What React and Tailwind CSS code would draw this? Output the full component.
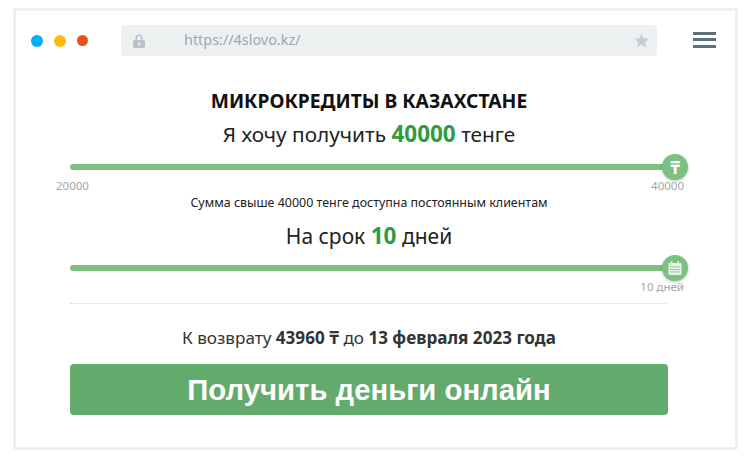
const PT = "font-['Noto_Sans',sans-serif]";

function SliderTrack({ children }) {
  return (
    <div className="relative h-[6px] w-[606px] rounded-full bg-[#7cc182]">
      <span className="absolute right-[-12px] top-[-10px] flex h-[26px] w-[26px] items-center justify-center rounded-full bg-[#7cc182] shadow-[0_1px_3px_rgba(0,0,0,0.25)]">
        {children}
      </span>
    </div>
  );
}

export default function App() {
  return (
    <div className={`h-[461px] w-[751px] bg-white pl-[13px] pt-[8px] ${PT}`}>
      <div className="h-[442px] w-[725px] rounded-[3px] border-[3px] border-[#edf1f2] bg-white">
        <div className="flex h-[45px] items-end">
          <div className="flex h-[31px] items-center pl-[15px]">
            <span className="h-[12px] w-[12px] rounded-full bg-[#00aeff]" />
            <span className="ml-[11px] h-[12px] w-[12px] rounded-full bg-[#ffbb0a]" />
            <span className="ml-[11px] h-[11px] w-[11px] rounded-full bg-[#e94e1b]" />
          </div>
          <div className="ml-[33px] flex h-[31px] w-[536px] items-center rounded-[3px] bg-[#edf0f1] pl-[12px] pr-[8px]">
            <svg width="12" height="14" viewBox="0 0 12 14" fill="#b6c2cb">
              <path d="M1.5 6h9A1.5 1.5 0 0 1 12 7.500v5A1.500 1.500 0 0 1 10.500 14h-9A1.500 1.500 0 0 1 0 12.500v-5A1.500 1.500 0 0 1 1.500 6Zm4.500 2.500a1.300 1.300 0 0 0-.6 2.450V12h1.200v-1.050A1.300 1.300 0 0 0 6 8.500Z" fillRule="evenodd" />
              <path d="M2.500 6.500V4a3.500 3.500 0 0 1 7 0v2.500H8V4a2 2 0 0 0-4 0v2.500Z" />
            </svg>
            <span className="ml-[39px] text-[14.400px] leading-none text-[#9aa8b3]">https://4slovo.kz/</span>
            <svg className="ml-auto" width="15" height="15" viewBox="0 0 24 24" fill="#c3ced7">
              <path d="M12 1l3.400 7.400 8.100.9-6 5.500 1.700 8L12 18.700 4.800 22.800l1.700-8-6-5.500 8.100-.9Z" />
            </svg>
          </div>
          <div className="ml-[36px] flex h-[31px] flex-col justify-center gap-[3.500px] pb-[2px]">
            <span className="h-[3px] w-[23px] bg-[#5b717f]" />
            <span className="h-[3px] w-[23px] bg-[#5b717f]" />
            <span className="h-[3px] w-[23px] bg-[#5b717f]" />
          </div>
        </div>

        <div className="ml-[54px] w-[598px]">
          <h1 className="mt-[32px] text-center text-[19.250px] font-bold leading-[26px] text-[#111]">МИКРОКРЕДИТЫ В КАЗАХСТАНЕ</h1>
          <p className="mt-[6px] text-center text-[20.800px] leading-[28px] text-[#222]">
            Я хочу получить <b className="text-[22.500px] text-[#2e9c3f]">40000</b> тенге
          </p>

          <div className="mt-[16px]">
            <SliderTrack>
              <span className="text-[17px] font-bold leading-none text-white">₸</span>
            </SliderTrack>
          </div>
          <div className="ml-[-14px] mt-[9px] flex w-[628px] justify-between text-[11.500px] leading-[14px] text-[#a5a5a5]">
            <span>20000</span>
            <span>40000</span>
          </div>
          <p className="mt-[2px] text-center text-[12.450px] leading-[16px] text-[#222]">Сумма свыше 40000 тенге доступна постоянным клиентам</p>
          <p className="mt-[11px] text-center text-[21px] leading-[28px] text-[#222]">
            На срок <b className="text-[22.500px] text-[#2e9c3f]">10</b> дней
          </p>

          <div className="mt-[15px]">
            <SliderTrack>
              <svg width="14" height="14" viewBox="0 0 14 14" fill="#e8f4e9">
                <rect x="0.500" y="2" width="13" height="12" rx="1" />
                <rect x="3" y="0" width="1.500" height="3.500" />
                <rect x="9.500" y="0" width="1.500" height="3.500" />
                <rect x="2" y="5.500" width="10" height="0.800" fill="#7cc182" />
                <rect x="2" y="8" width="10" height="0.800" fill="#7cc182" />
                <rect x="2" y="10.500" width="10" height="0.800" fill="#7cc182" />
              </svg>
            </SliderTrack>
          </div>
          <div className="mt-[9px] flex w-[614px] justify-end text-[11.500px] leading-[14px] text-[#a5a5a5]">10 дней</div>
          <div className="mt-[9px] border-t border-dotted border-[#d8d8d8]" />

          <p className="mt-[23px] text-center text-[17.100px] leading-[22px] text-[#333]">
            К возврату <b>43960 ₸</b> до <b>13 февраля 2023 года</b>
          </p>
          <button
            type="button"
            className="mt-[15px] block h-[51px] w-[598px] rounded-[4px] bg-[#62ab6c] text-center font-['Liberation_Sans',sans-serif] text-[29.300px] font-bold leading-none text-white"
          >
            Получить деньги онлайн
          </button>
        </div>
      </div>
    </div>
  );
}
